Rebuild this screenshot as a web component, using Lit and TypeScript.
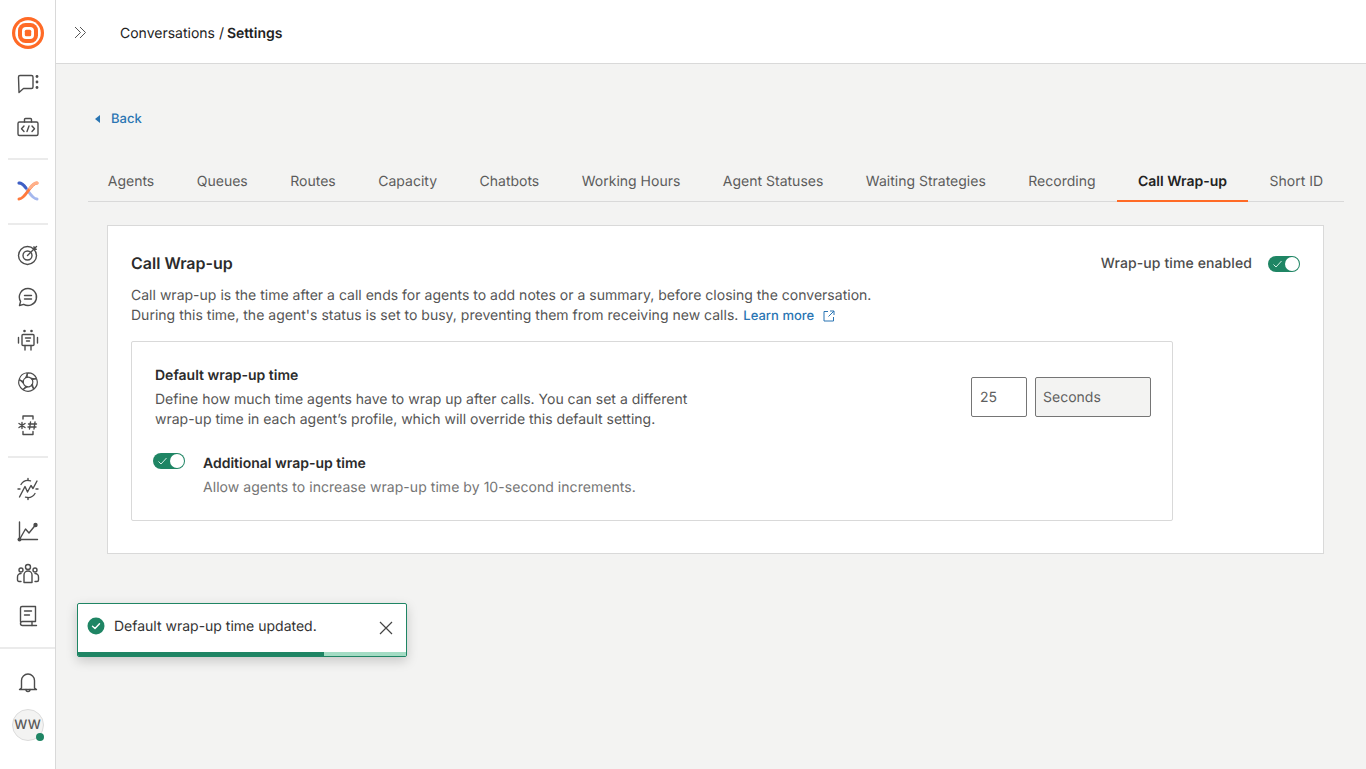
import { LitElement, html, css, svg } from "lit";
import { customElement } from "lit/decorators.js";

const ic = (c: unknown, w = 24) => html`<svg class="ic" width=${w} height=${w} viewBox="0 0 24 24" fill="none" stroke="#4c4c4c" stroke-width="1.4" stroke-linecap="round" stroke-linejoin="round">${c}</svg>`;

const blades = [0, 72, 144, 216, 288].map((a) => svg`<path transform="rotate(${a} 12 12)" stroke-width="1.200" d="M12 2.800A9.200 9.200 0 0 1 20.500 8.300L16.300 9.800A4.800 4.800 0 0 0 9.600 7.800Z"/>`);

const icons = {
  chat: svg`<path d="M2.500 5A1.500 1.500 0 0 1 4 3.500H15.500A1.500 1.500 0 0 1 17 5V15A1.500 1.500 0 0 1 15.500 16.500H7.500L3 20.500Z"/><g fill="#4c4c4c" stroke="none"><circle cx="21" cy="4.500" r="1.400"/><circle cx="21" cy="10" r="1.400"/><circle cx="21" cy="15.500" r="1.400"/></g>`,
  dev: svg`<rect x="2" y="7" width="20" height="13.500" rx="1.500"/><path d="M8.500 7V4.500A1 1 0 0 1 9.500 3.500H14.500A1 1 0 0 1 15.500 4.500V7"/><path d="M8 11 5.500 13.750 8 16.500M16 11 18.500 13.750 16 16.500M13 11l-2 5.500"/>`,
  target: svg`<circle cx="11.500" cy="12.500" r="9"/><circle cx="11.500" cy="12.500" r="4.500"/><path d="M11.500 12.500 20.500 3.500M18 3.800V6.200H20.300"/>`,
  msg: svg`<path d="M12 3.500a8.500 8.500 0 1 1-4.300 15.800L3.500 20.500l1.100-4.100A8.500 8.500 0 0 1 12 3.500Z"/><path d="M8.500 10.500H15.500M8.500 14H15.500"/>`,
  bot: svg`<rect x="6" y="6.500" width="12" height="11" rx="1"/><path d="M9.500 10h5M10.500 13h3M9 17.500V22M15 17.500V22M2.500 9.500V15M21.500 9.500V15"/><g fill="#4c4c4c" stroke="none"><circle cx="8.500" cy="3" r="1.300"/><circle cx="15.500" cy="3" r="1.300"/></g>`,
  ai: svg`${blades}`,
  hash: svg`<path d="M7 6V3H17V6M7 18.500V21.500H17V18.500"/><path d="M3 10.500 9 14.500M9 10.500 3 14.500M6 9.500V15.500M14.500 9 13.500 16M19 9 18 16M12.500 11H20.500M12 14H20"/>`,
  pulse: svg`<path d="M5 7.500A8.500 8.500 0 0 1 14.500 3.800M19 16.500A8.500 8.500 0 0 1 9.500 20.200"/><path d="M2 12H4M20 12H22M12 1.500V3.500M12 20.500V22.500"/><path d="M3.500 20 9 9.500 11.500 15 15 8.500 17 11.500 21 4"/>`,
  chart: svg`<path d="M3.500 3V20.500H21.500"/><path d="M3.500 20.500 9.500 10 13 14 19.500 6"/><g fill="#4c4c4c" stroke="none"><circle cx="3.500" cy="20.500" r="2"/><circle cx="19.500" cy="6" r="2.200"/></g>`,
  team: svg`<circle cx="12" cy="5" r="2.500"/><path d="M8 20.500V13a4 4 0 0 1 8 0V20.500Z"/><circle cx="5" cy="8" r="2"/><circle cx="19" cy="8" r="2"/><path d="M5 19.500H3A1.500 1.500 0 0 1 1.500 18V15A3.500 3.500 0 0 1 5 11.500M19 19.500H21A1.500 1.500 0 0 0 22.500 18V15A3.500 3.500 0 0 0 19 11.500"/>`,
  book: svg`<path d="M4.500 17.500V4A1.500 1.500 0 0 1 6 2.500H19.500V17.500H6.500A2 2 0 0 0 4.500 19.500V19.500A2 2 0 0 0 6.500 21.500H20.500"/><path d="M16 17.500V21.500M8.500 7H15.500M8.500 11H13.500"/>`,
  bell: svg`<path d="M5.500 18V10.500a6.500 6.500 0 0 1 13 0V18L20.500 19.500H3.500Z"/><path d="M10 19.500a2 2 0 0 0 4 0"/>`,
};

const tabs = ["Agents", "Queues", "Routes", "Capacity", "Chatbots", "Working Hours", "Agent Statuses", "Waiting Strategies", "Recording", "Call Wrap-up", "Short ID"];

@customElement("app-root")
export class AppRoot extends LitElement {
  static styles = css`
    :host { display: block; height: 769px; font-family: Inter, "Liberation Sans", sans-serif; font-size: 14px; color: #4c4c4c; background: #f3f3f2; overflow: hidden; text-rendering: geometricPrecision; }
    .app { display: flex; height: 769px; position: relative; }
    .side { width: 55px; flex: none; background: #fff; border-right: 1px solid #d9d9d9; display: flex; flex-direction: column; align-items: center; padding-top: 17px; box-sizing: content-box; }
    .logo { width: 32px; height: 32px; display: block; margin-bottom: 14px; }
    .group { display: flex; flex-direction: column; width: 100%; align-items: center; }
    .it { height: 42.4px; display: flex; align-items: center; justify-content: center; width: 100%; flex: none; }
    .it.lg { height: 42px; }
    .div { width: 40px; height: 2px; background: #ebebeb; flex: none; margin: 10px 0; }
    .div.mid { margin: 11px 0 9px; }
    .div.full { width: 55px; margin: 10px 0 12px; }
    .xl { height: 42px; display: flex; align-items: center; justify-content: center; }
    .avatar { width: 30px; height: 30px; border-radius: 50%; background: #f3f3f2; border: 1px solid #dcdcdc; display: flex; align-items: center; justify-content: center; font-size: 13px; font-weight: 500; position: relative; margin-top: 6px; color: #5a5a5a; }
    .dot { position: absolute; right: -1px; bottom: -1px; width: 8px; height: 8px; border-radius: 50%; background: #1f8564; }
    .main { flex: 1; min-width: 0; display: flex; flex-direction: column; }
    .hdr { height: 64px; box-sizing: border-box; background: #fff; border-bottom: 1px solid #d9d9d9; display: flex; align-items: center; flex: none; padding-left: 17px; gap: 32px; }
    .hdr svg { margin-top: 1px; }
    .crumb { color: #222; margin-top: 3px; }
    .crumb b { font-weight: 600; margin-left: -1px; }
    .content { padding: 0 22px 0 32px; }
    .back { display: flex; align-items: center; gap: 11px; height: 20px; margin: 45px 0 0 7px; color: #2a75b3; font-weight: 500; font-size: 13px; }
    .tabs { display: flex; margin-top: 32px; border-bottom: 1px solid #d9d9d9; height: 40px; box-sizing: content-box; }
    .tab { padding: 0 21.25px; line-height: 42px; height: 40px; white-space: nowrap; color: #5c5c5c; box-sizing: border-box; }
    .tab:first-child { margin-left: -1.500px; }
    .tab.on { font-weight: 600; color: #222; border-bottom: 2px solid #ff6a26; height: 41px; }
    .card { margin: 23px 20px 0 19px; background: #fff; border: 1px solid #d9d9d9; padding: 24px 23px 32px; height: 329px; box-sizing: border-box; }
    .top { display: flex; justify-content: space-between; align-items: center; height: 27px; }
    h2 { margin: -2px 0 0; font-size: 16px; font-weight: 600; color: #2b2b2b; }
    .en { display: flex; align-items: center; gap: 16px; font-weight: 500; color: #4c4c4c; letter-spacing: .1px; }
    .sw { width: 32px; height: 16px; border-radius: 8px; background: #1f8564; position: relative; flex: none; }
    .sw svg { position: absolute; left: 5px; top: 4px; }
    .knob { position: absolute; right: 1px; top: 1px; width: 14px; height: 14px; border-radius: 50%; background: #fff; }
    .para { margin: 9px 0 0; line-height: 20px; color: #555; letter-spacing: .015px; }
    .para a { color: #2a75b3; font-weight: 500; font-size: 13px; margin-left: 1px; }
    .ext { vertical-align: -2px; margin-left: 5px; }
    .box { margin-top: 15px; width: 1042px; height: 180px; box-sizing: border-box; border: 1px solid #d9d9d9; border-radius: 2px; padding: 24px 21px 0 23px; }
    .row { display: flex; justify-content: space-between; height: 64px; }
    .lab { font-weight: 600; color: #2b2b2b; line-height: 20px; }
    .desc { line-height: 20px; color: #555; margin-top: 4px; width: 560px; }
    .inputs { display: flex; gap: 8px; margin-top: 11px; }
    .f { height: 40px; box-sizing: border-box; border: 1px solid #757575; border-radius: 2px; padding: 0 7px; display: flex; align-items: center; color: #5f5f5f; }
    .f.n { width: 56px; padding-left: 8px; }
    .f.s { width: 116px; background: #f3f3f2; }
    .add { display: flex; margin-top: 24px; }
    .add .sw { margin: -1px 18px 0 -2px; }
    .d2 { color: #757575; margin-top: 4px; line-height: 20px; letter-spacing: .05px; }
    .toast { position: absolute; left: 77px; top: 603px; width: 330px; height: 54px; box-sizing: border-box; background: #fff; border: 1px solid #1f8564; border-radius: 2px; box-shadow: 0 4px 12px rgba(0,0,0,.18); overflow: hidden; display: flex; align-items: flex-start; padding: 13px 0 0 9px; gap: 9px; color: #333; }
    .toast span { line-height: 18px; flex: 1; margin-top: 1px; }
    .toast .x { margin: 4px 13px 0 0; }
    .bar { position: absolute; left: 0; right: 0; bottom: 0; height: 4px; background: #a4dcc4; }
    .bar i { display: block; height: 100%; width: 246px; background: #1f8564; }
  `;
  render() {
    const sw = html`<div class="sw"><svg width="9" height="8" viewBox="0 0 9 8" fill="none" stroke="#d6efe4" stroke-width="1"><path d="M.5 4.500 3 7 8.500 1"/></svg><div class="knob"></div></div>`;
    return html`<div class="app">
      <nav class="side">
        <svg class="logo" viewBox="0 0 32 32"><circle cx="16" cy="16" r="16" fill="#ff6a26"/><circle cx="16" cy="16" r="12.800" fill="#fff"/><rect x="6" y="6" width="20" height="20" rx="7.500" fill="#ff6a26"/><rect x="10" y="10" width="12" height="12" rx="4" fill="#fff"/><rect x="12.800" y="12.800" width="6.400" height="6.400" rx="1.500" fill="#ff6a26"/></svg>
        <div class="group"><div class="it">${ic(icons.chat)}</div><div class="it">${ic(icons.dev)}</div></div>
        <div class="div"></div>
        <div class="it lg"><svg width="22" height="20" viewBox="0 0 22 20" fill="none" stroke-width="3" stroke-linecap="round"><path d="M2 2C9 2 13 18 20 18" stroke="#a5b8ee"/><path d="M2 2C5 2 7 4 9 7" stroke="#3f5fc4"/><path d="M2 18C9 18 13 2 20 2" stroke="#ff7a3d"/><path d="M20 2C17 2 15 4 13 7" stroke="#ffb08a"/></svg></div>
        <div class="div mid"></div>
        <div class="group"><div class="it">${ic(icons.target)}</div><div class="it">${ic(icons.msg)}</div><div class="it">${ic(icons.bot)}</div><div class="it">${ic(icons.ai)}</div><div class="it">${ic(icons.hash)}</div></div>
        <div class="div"></div>
        <div class="group"><div class="it">${ic(icons.pulse)}</div><div class="it">${ic(icons.chart)}</div><div class="it">${ic(icons.team)}</div><div class="it">${ic(icons.book)}</div></div>
        <div class="div full"></div>
        <div class="xl">${ic(icons.bell)}</div>
        <div class="avatar">WW<div class="dot"></div></div>
      </nav>
      <div class="main">
        <header class="hdr">
          <svg width="15" height="15" viewBox="0 0 15 15" fill="none" stroke="#555" stroke-width="1"><path d="M2 2 7.500 7.500 2 13M7 2 12.500 7.500 7 13"/></svg>
          <div class="crumb">Conversations / <b>Settings</b></div>
        </header>
        <div class="content">
          <div class="back"><svg width="5" height="8" viewBox="0 0 5 8"><path d="M5 0V8L0 4Z" fill="#2a75b3"/></svg>Back</div>
          <div class="tabs">${tabs.map((t) => html`<div class="tab ${t === "Call Wrap-up" ? "on" : ""}">${t}</div>`)}</div>
          <section class="card">
            <div class="top"><h2>Call Wrap-up</h2><div class="en">Wrap-up time enabled ${sw}</div></div>
            <p class="para">Call wrap-up is the time after a call ends for agents to add notes or a summary, before closing the conversation.<br>During this time, the agent's status is set to busy, preventing them from receiving new calls. <a>Learn more</a> <svg class="ext" width="12" height="12" viewBox="0 0 12 12" fill="none" stroke="#2a75b3" stroke-width="1"><path d="M5 1.500H1V11H10.500V7M7 1H11V5M11 1 5.500 6.500"/></svg></p>
            <div class="box">
              <div class="row">
                <div><div class="lab">Default wrap-up time</div><div class="desc">Define how much time agents have to wrap up after calls. You can set a different wrap-up time in each agent’s profile, which will override this default setting.</div></div>
                <div class="inputs"><div class="f n">25</div><div class="f s">Seconds</div></div>
              </div>
              <div class="add">${sw}<div><div class="lab">Additional wrap-up time</div><div class="d2">Allow agents to increase wrap-up time by 10-second increments.</div></div></div>
            </div>
          </section>
        </div>
      </div>
      <div class="toast">
        <svg width="18" height="18" viewBox="0 0 18 18"><circle cx="9" cy="9" r="8.500" fill="#1f8564"/><path d="M5.500 9.200 8 11.500 12.500 6.800" fill="none" stroke="#fff" stroke-width="1.400" stroke-linecap="round" stroke-linejoin="round"/></svg>
        <span>Default wrap-up time updated.</span>
        <svg class="x" width="14" height="14" viewBox="0 0 14 14" stroke="#444" stroke-width="1.200"><path d="M1 1 13 13M13 1 1 13"/></svg>
        <div class="bar"><i></i></div>
      </div>
    </div>`;
  }
}
